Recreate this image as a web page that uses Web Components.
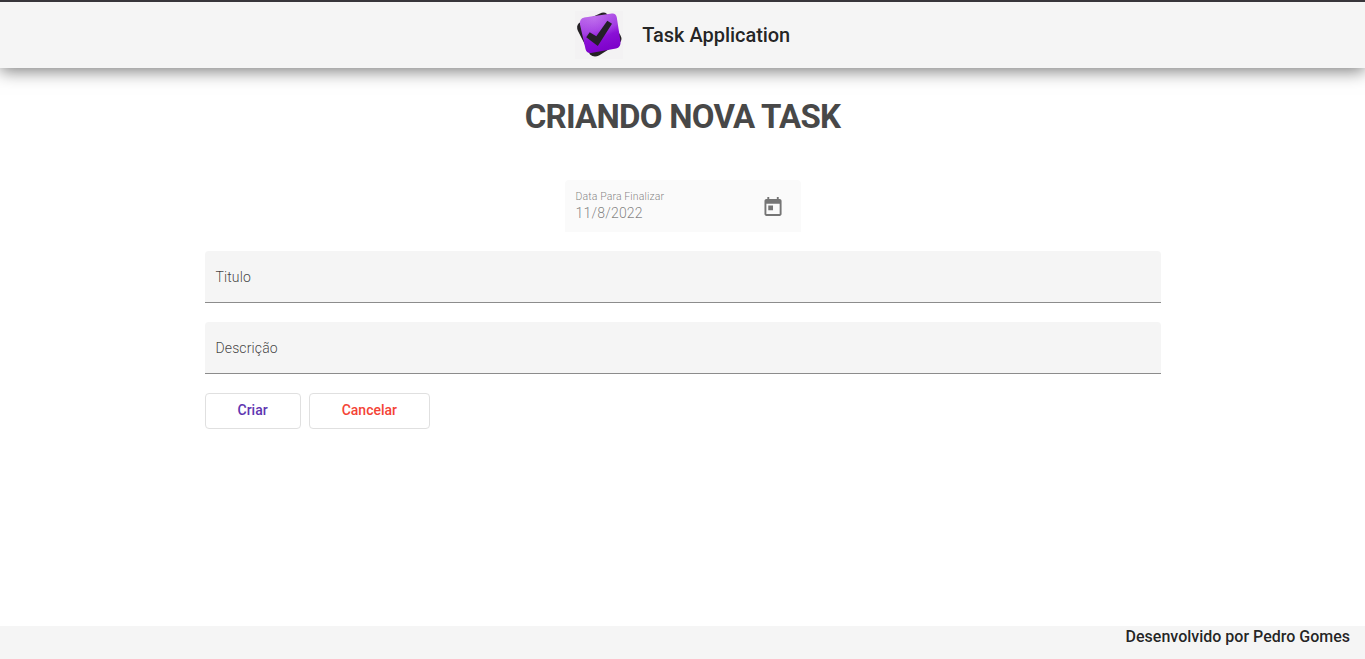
<!DOCTYPE html>
<html lang="pt-BR">
<head>
<meta charset="utf-8">
<title>Task Application</title>
<style>
html,body{margin:0;height:100%;background:#fff;font-family:Roboto,"Liberation Sans",sans-serif;overflow:hidden}
</style>
</head>
<body>
<task-app></task-app>
<script>
const define = (name, html) => customElements.define(name, class extends HTMLElement {
  constructor() {
    super();
    this.attachShadow({ mode: 'open' }).innerHTML = html;
  }
});

define('task-logo', `
<style>:host{display:block;width:48px;height:48px;background:#f3f2f3}svg{display:block}</style>
<svg width="48" height="48" viewBox="0 0 48 48">
  <defs>
    <linearGradient id="g" x1=".3" y1="0" x2=".6" y2="1">
      <stop offset="0" stop-color="#b65ee8"/><stop offset=".42" stop-color="#a13ae2"/><stop offset=".6" stop-color="#8a10d6"/><stop offset="1" stop-color="#7b00c8"/>
    </linearGradient>
    <radialGradient id="s" cx=".35" cy=".12" r=".6">
      <stop offset="0" stop-color="#d9a0f8" stop-opacity=".35"/><stop offset="1" stop-color="#c070f0" stop-opacity="0"/>
    </radialGradient>
  </defs>
  <path fill="#242124" d="M25 2.500Q29 .5 32 3L44 22Q48 27 45.500 31L24 44.500Q19 47 15 43.500L3 20Q.8 15 4 12Z"/>
  <path fill="url(#g)" d="M9.500 6.500L37 2.600Q41 2.300 41.800 6.500L45.500 30.500Q46 36.500 41 37.500L16 42Q11.500 42.500 10.500 38L5 13.500Q4.200 7.600 9.500 6.500Z"/>
  <path fill="url(#s)" d="M9.500 6.500L37 2.600Q41 2.300 41.800 6.500L45.500 30.500Q46 36.500 41 37.500L16 42Q11.500 42.500 10.500 38L5 13.500Q4.200 7.600 9.500 6.500Z"/>
  <path fill="#242027" d="M32.300 9.800L37 12.700L22.800 35L11.200 26.200L14.700 21.200L21.300 25.300Z"/>
</svg>`);

define('app-header', `
<style>
:host{display:flex;box-sizing:border-box;height:68px;flex:none;border-top:2px solid #38363b;background:#f5f5f5;justify-content:center;align-items:center;gap:19.500px;box-shadow:0 3px 16px rgba(0,0,0,.52);color:rgba(0,0,0,.87);font-size:20px;font-weight:500;line-height:32px}
span{letter-spacing:-.04px}
</style>
<task-logo></task-logo><span><slot></slot></span>`);

define('page-title', `
<style>:host{display:block;text-align:center;font-size:33px;line-height:38px;letter-spacing:-.74px;color:#484848}h1{margin:0;font:inherit;font-weight:700}</style>
<h1><slot></slot></h1>`);

define('date-field', `
<style>
:host{display:flex;box-sizing:border-box;width:236px;height:52px;background:#fafafa;border-radius:4px 4px 0 0;align-items:center;justify-content:space-between;padding:0 18px 0 11px;font-weight:300;color:rgba(0,0,0,.5)}
.text{display:flex;flex-direction:column;padding-bottom:1px}
.label{font-size:10.500px;line-height:15px;letter-spacing:.12px}
.value{font-size:14px;line-height:18px;letter-spacing:.2px}
svg{display:block;fill:#757575;margin-top:1px}
</style>
<div class="text"><span class="label"><slot name="label"></slot></span><span class="value"><slot></slot></span></div>
<svg width="19" height="19" viewBox="2.500 1 20 20"><path d="M19 3h-1V1h-2v2H8V1H6v2H5c-1.110 0-1.990.9-1.990 2L3 19c0 1.100.89 2 2 2h14c1.100 0 2-.9 2-2V5c0-1.100-.9-2-2-2zm0 16H5V8h14v11zM7 10h5v5H7z"/></svg>`);

define('text-field', `
<style>:host{display:flex;box-sizing:border-box;height:52px;background:#f5f5f5;border-bottom:1px solid #8c8c8c;border-radius:4px 4px 0 0;align-items:center;padding:1px 11px 0;font-size:14px;font-weight:300;letter-spacing:.12px;color:rgba(0,0,0,.75)}</style>
<slot></slot>`);

define('action-button', `
<style>:host{display:block}button{display:block;box-sizing:border-box;height:36px;margin:0;padding:0 32px 2px;border:1px solid #e0e0e0;border-radius:4px;background:#fff;font:500 14px/32px Roboto,sans-serif;color:inherit}</style>
<button><slot></slot></button>`);

define('app-footer', `
<style>:host{display:block;box-sizing:border-box;height:33px;flex:none;background:#f5f5f5;padding-right:15px;text-align:right;font-size:16px;font-weight:500;line-height:21px;color:rgba(0,0,0,.87)}</style>
<slot></slot>`);

define('task-form', `
<style>
:host{display:flex;flex-direction:column;width:956px;margin:0 auto;gap:19px}
.date{align-self:center}
.actions{display:flex;gap:8px}
</style>
<date-field class="date"><span slot="label">Data Para Finalizar</span>11/8/2022</date-field>
<text-field>Titulo</text-field>
<text-field>Descrição</text-field>
<div class="actions"><action-button style="color:#5e35b1">Criar</action-button><action-button style="color:#f44336">Cancelar</action-button></div>`);

define('task-app', `
<style>
:host{display:flex;flex-direction:column;height:100vh}
main{flex:1;padding-top:30px}
page-title{margin-bottom:44px}
</style>
<app-header>Task Application</app-header>
<main><page-title>CRIANDO NOVA TASK</page-title><task-form></task-form></main>
<app-footer>Desenvolvido por Pedro Gomes</app-footer>`);
</script>
</body>
</html>
